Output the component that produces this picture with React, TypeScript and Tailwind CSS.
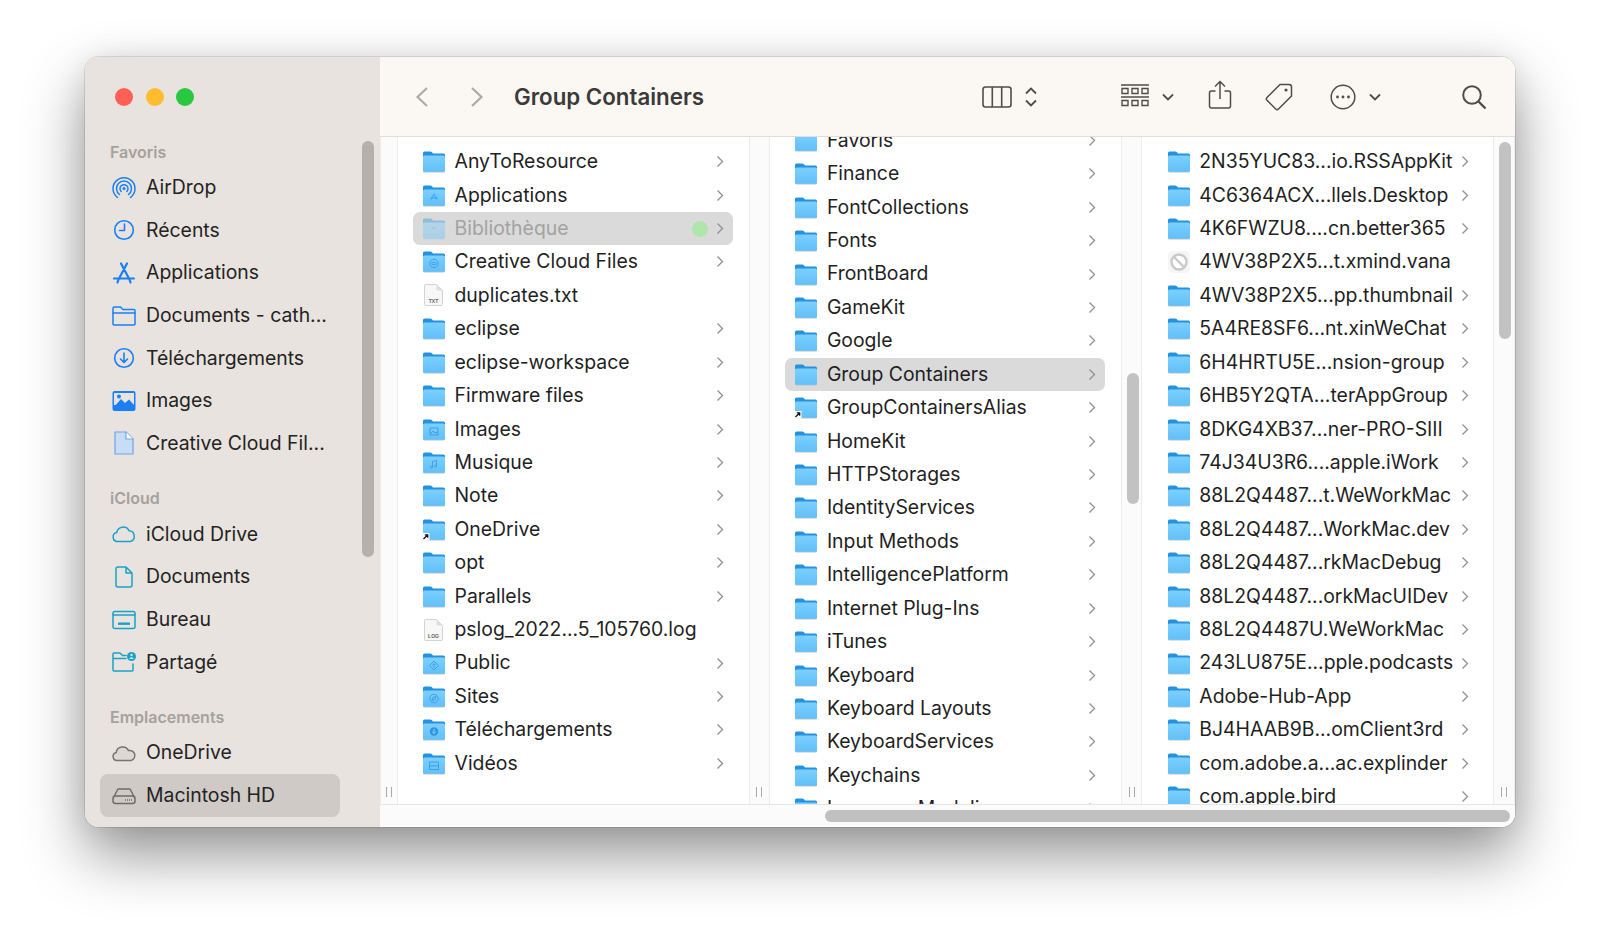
import type { ReactNode } from "react";

type Glyph = "apps" | "lib" | "cc" | "image" | "music" | "public" | "sites" | "down" | "video";

type Item = {
  name: string;
  kind?: "folder" | "doc" | "blocked";
  glyph?: Glyph;
  alias?: boolean;
  label?: string;
  noArrow?: boolean;
  dimmed?: boolean;
  tag?: boolean;
  selected?: boolean;
};

const col1: Item[] = [
  { name: "AnyToResource" },
  { name: "Applications", glyph: "apps" },
  { name: "Bibliothèque", glyph: "lib", dimmed: true, tag: true, selected: true },
  { name: "Creative Cloud Files", glyph: "cc" },
  { name: "duplicates.txt", kind: "doc", label: "TXT", noArrow: true },
  { name: "eclipse" },
  { name: "eclipse-workspace" },
  { name: "Firmware files" },
  { name: "Images", glyph: "image" },
  { name: "Musique", glyph: "music" },
  { name: "Note" },
  { name: "OneDrive", alias: true },
  { name: "opt" },
  { name: "Parallels" },
  { name: "pslog_2022...5_105760.log", kind: "doc", label: "LOG", noArrow: true },
  { name: "Public", glyph: "public" },
  { name: "Sites", glyph: "sites" },
  { name: "Téléchargements", glyph: "down" },
  { name: "Vidéos", glyph: "video" },
];

const col2: Item[] = [
  { name: "Favoris" },
  { name: "Finance" },
  { name: "FontCollections" },
  { name: "Fonts" },
  { name: "FrontBoard" },
  { name: "GameKit" },
  { name: "Google" },
  { name: "Group Containers", selected: true },
  { name: "GroupContainersAlias", alias: true },
  { name: "HomeKit" },
  { name: "HTTPStorages" },
  { name: "IdentityServices" },
  { name: "Input Methods" },
  { name: "IntelligencePlatform" },
  { name: "Internet Plug-Ins" },
  { name: "iTunes" },
  { name: "Keyboard" },
  { name: "Keyboard Layouts" },
  { name: "KeyboardServices" },
  { name: "Keychains" },
  { name: "LanguageModeling" },
];

const col3: Item[] = [
  { name: "2N35YUC83...io.RSSAppKit" },
  { name: "4C6364ACX...llels.Desktop" },
  { name: "4K6FWZU8....cn.better365" },
  { name: "4WV38P2X5...t.xmind.vana", kind: "blocked", noArrow: true },
  { name: "4WV38P2X5...pp.thumbnail" },
  { name: "5A4RE8SF6...nt.xinWeChat" },
  { name: "6H4HRTU5E...nsion-group" },
  { name: "6HB5Y2QTA...terAppGroup" },
  { name: "8DKG4XB37...ner-PRO-SIII" },
  { name: "74J34U3R6....apple.iWork" },
  { name: "88L2Q4487...t.WeWorkMac" },
  { name: "88L2Q4487...WorkMac.dev" },
  { name: "88L2Q4487...rkMacDebug" },
  { name: "88L2Q4487...orkMacUIDev" },
  { name: "88L2Q4487U.WeWorkMac" },
  { name: "243LU875E...pple.podcasts" },
  { name: "Adobe-Hub-App" },
  { name: "BJ4HAAB9B...omClient3rd" },
  { name: "com.adobe.a...ac.explinder" },
  { name: "com.apple.bird" },
];

function FolderGlyph({ glyph }: { glyph: Glyph }) {
  const s = { fill: "none", stroke: "#3a9be2", strokeWidth: 0.9 };
  switch (glyph) {
    case "apps":
      return <path d="M11 9l-3 5.500M11 9l3 5.500M7.500 13h7" {...s} />;
    case "lib":
      return <path d="M9 10h4M8.500 16h.6M13 16h.6" {...s} />;
    case "cc":
      return (
        <g {...s}>
          <circle cx="11" cy="12.500" r="4.200" />
          <ellipse cx="11" cy="12.500" rx="2.200" ry="1.400" />
        </g>
      );
    case "image":
      return <path d="M7 9h8v7H7zM7 15l3-3 2 2 1.500-1 1.500 2" {...s} />;
    case "music":
      return <path d="M9.500 15V9.500l4-1v5.500M9.500 15a1 1 0 1 1-1-.9M13.500 14a1 1 0 1 1-1-.9" {...s} />;
    case "public":
      return <path d="M11 8l4.500 4.500L11 17l-4.500-4.500zM11 15v-4M9.500 12L11 10.500l1.500 1.500" {...s} />;
    case "sites":
      return (
        <g {...s}>
          <circle cx="11" cy="12.500" r="4.200" />
          <path d="M13 10.500l-3 1-1 3 3-1z" />
        </g>
      );
    case "down":
      return (
        <g>
          <circle cx="11" cy="12.500" r="4.200" fill="#2f93de" />
          <path d="M11 10v4.500M9.200 12.800L11 14.500l1.800-1.700" fill="none" stroke="#8fd3fb" strokeWidth="1" />
        </g>
      );
    case "video":
      return <path d="M6.500 9h9v7.500h-9zM6.500 12.800h9" {...s} />;
  }
}

function Folder({ glyph, alias }: { glyph?: Glyph; alias?: boolean }) {
  return (
    <svg width="24" height="23" viewBox="0 0 24 23" className="shrink-0">
      <defs>
        <linearGradient id="folderBody" x1="0" y1="0" x2="0" y2="1">
          <stop offset="0" stopColor="#7bd0fe" />
          <stop offset="1" stopColor="#62bff9" />
        </linearGradient>
      </defs>
      <path d="M1 21a1.500 1.500 0 0 0 1.500 1.500h19A1.500 1.500 0 0 0 23 21V8H1z" fill="#b9c3ca" />
      <path
        d="M1 5V3a1.500 1.500 0 0 1 1.500-1.500h5.800c.6 0 1 .2 1.400.6L11 3.500h10.500A1.500 1.500 0 0 1 23 5v4H1z"
        fill="#2492de"
      />
      <path
        d="M1 7a1.500 1.500 0 0 1 1.500-1.500h19A1.500 1.500 0 0 1 23 7v13.500a1.200 1.200 0 0 1-1.200 1.200H2.200A1.200 1.200 0 0 1 1 20.500z"
        fill="url(#folderBody)"
      />
      {glyph && (
        <g transform="translate(1 1)">
          <FolderGlyph glyph={glyph} />
        </g>
      )}
      {alias && (
        <g>
          <rect x="0" y="15" width="7.500" height="7.500" fill="#ffffff" />
          <path d="M1.500 21l4-4M2.800 16.800h2.900v2.900" fill="none" stroke="#111111" strokeWidth="1.300" />
        </g>
      )}
    </svg>
  );
}

function DocIcon({ label }: { label?: string }) {
  return (
    <svg width="24" height="24" viewBox="0 0 24 24" className="shrink-0">
      <path
        d="M3.500 1.500h11l6 6v14a1 1 0 0 1-1 1h-16a1 1 0 0 1-1-1v-19a1 1 0 0 1 1-1z"
        fill="#f7f7f7"
        stroke="#d3d3d3"
        strokeWidth="1"
      />
      <path d="M14.500 1.500v5a1 1 0 0 0 1 1h5z" fill="#dedede" />
      <text
        x="11.500"
        y="19.500"
        textAnchor="middle"
        fontSize="5"
        fontWeight="600"
        fontFamily="Liberation Sans, sans-serif"
        fill="#666666"
      >
        {label}
      </text>
    </svg>
  );
}

function BlockedIcon() {
  return (
    <svg width="24" height="24" viewBox="0 0 24 24" className="shrink-0">
      <rect x="1" y="1" width="22" height="22" rx="5" fill="#f6f6f6" />
      <circle cx="12" cy="12" r="7.500" fill="#ffffff" stroke="#c9c9c9" strokeWidth="2.400" />
      <path d="M7 7l10 10" stroke="#c9c9c9" strokeWidth="2.400" />
    </svg>
  );
}

function Chevron() {
  return (
    <svg width="8" height="13" viewBox="0 0 8 13" className="shrink-0">
      <path d="M1.500 1.500l5 5-5 5" fill="none" stroke="#8f8f8f" strokeWidth="1.300" />
    </svg>
  );
}

function Row({ item }: { item: Item }) {
  const kind = item.kind ?? "folder";
  return (
    <div
      className={`mx-[15.500px] flex h-[33.430px] shrink-0 items-center rounded-[7px] pl-[9px] pr-[9px] ${
        item.selected ? "bg-[#dadada]" : ""
      }`}
    >
      <div className={`flex w-[32.500px] shrink-0 ${item.dimmed ? "opacity-40" : ""}`}>
        {kind === "folder" && <Folder glyph={item.glyph} alias={item.alias} />}
        {kind === "doc" && <DocIcon label={item.label} />}
        {kind === "blocked" && <BlockedIcon />}
      </div>
      <span className={`whitespace-nowrap ${item.dimmed ? "text-[#a2a2a2]" : "text-[#1f1f1f]"}`}>{item.name}</span>
      <div className="ml-auto flex items-center gap-[8px]">
        {item.tag && <span className="h-[16px] w-[16px] rounded-full bg-[#b0e6ab]" />}
        {!item.noArrow && <Chevron />}
      </div>
    </div>
  );
}

function Handle() {
  return (
    <div className="absolute bottom-[7px] left-1/2 flex h-[10px] -translate-x-1/2 gap-[4px]">
      <span className="h-full w-px bg-[#a8a8a8]" />
      <span className="h-full w-px bg-[#a8a8a8]" />
    </div>
  );
}

function Strip({ width, children }: { width: string; children?: ReactNode }) {
  return <div className={`relative h-full shrink-0 border-x border-[#ececec] bg-[#fbfbfb] ${width}`}>{children}</div>;
}

function Column({ items, top }: { items: Item[]; top: string }) {
  return (
    <div className={`flex h-full w-[351px] shrink-0 flex-col overflow-hidden bg-white ${top}`}>
      {items.map((item) => (
        <Row key={item.name} item={item} />
      ))}
    </div>
  );
}

const blue = "#1a7ff5";
const teal = "#19a2c9";

function SideIcon({ children }: { children: ReactNode }) {
  return (
    <svg
      width="26"
      height="26"
      viewBox="0 0 26 26"
      fill="none"
      strokeWidth="1.500"
      strokeLinecap="round"
      strokeLinejoin="round"
      className="shrink-0"
    >
      {children}
    </svg>
  );
}

const icons: Record<string, ReactNode> = {
  airdrop: (
    <SideIcon>
      <g stroke={blue}>
        <path d="M6.500 22.500a11 11 0 1 1 13 0" />
        <path d="M8.500 19.500a7.500 7.500 0 1 1 9 0" />
        <path d="M10.200 16.500a4 4 0 1 1 5.600 0" />
        <circle cx="13" cy="13.500" r="0.800" fill={blue} />
      </g>
    </SideIcon>
  ),
  recents: (
    <SideIcon>
      <g stroke={blue} strokeWidth="1.600">
        <circle cx="13" cy="13" r="9.300" />
        <path d="M13.500 7v6.500H8.500" />
      </g>
    </SideIcon>
  ),
  apps: (
    <SideIcon>
      <g stroke={blue} strokeWidth="2.200">
        <path d="M10 3.500l8.500 16M16 3.500l-8.500 16M3 18.500h20M6.500 22.500l1-3M19.500 22.500l-1-3" />
      </g>
    </SideIcon>
  ),
  folder: (
    <SideIcon>
      <g stroke={blue}>
        <path d="M2 8V5.500A1.500 1.500 0 0 1 3.500 4h6L12 6.500h11a1 1 0 0 1 1 1V21a1 1 0 0 1-1 1H3a1 1 0 0 1-1-1z" />
        <path d="M2 10h22" />
      </g>
    </SideIcon>
  ),
  download: (
    <SideIcon>
      <g stroke={blue} strokeWidth="1.600">
        <circle cx="13" cy="13" r="9.300" />
        <path d="M13 8v9.500M9.500 14l3.500 3.500 3.500-3.500" />
      </g>
    </SideIcon>
  ),
  image: (
    <SideIcon>
      <rect x="1.500" y="3" width="23" height="20" rx="2" fill={blue} />
      <rect x="3" y="5" width="20" height="12" fill="#e8e3df" />
      <path d="M3 19l7-8 4 4 4-3.500 5 5.500v2H3z" fill={blue} />
      <circle cx="8" cy="8.500" r="2" fill={blue} />
    </SideIcon>
  ),
  doc: (
    <SideIcon>
      <path d="M4 2h11l7 7v15H4z" fill="#c9dcf5" stroke="#6fa5e8" strokeWidth="1.200" />
      <path d="M15 2v7h7" fill="#ffffff" stroke="#6fa5e8" strokeWidth="1.200" />
    </SideIcon>
  ),
  cloud: (
    <SideIcon>
      <path
        d="M6.500 20.500a4.500 4.500 0 0 1-.8-8.900 6.500 6.500 0 0 1 12.300-1.800 5.500 5.500 0 0 1 1.500 10.700z"
        stroke={teal}
      />
    </SideIcon>
  ),
  tealdoc: (
    <SideIcon>
      <path d="M7 3h8l6 6v12a2 2 0 0 1-2 2H7a2 2 0 0 1-2-2V5a2 2 0 0 1 2-2zM15 3v6h6" stroke={teal} />
    </SideIcon>
  ),
  desktop: (
    <SideIcon>
      <g stroke={teal}>
        <rect x="2" y="4.500" width="22" height="17" rx="2" />
        <path d="M2 8h22" />
      </g>
      <rect x="7" y="15.500" width="12" height="2.400" fill={teal} />
    </SideIcon>
  ),
  shared: (
    <SideIcon>
      <g stroke={teal}>
        <path d="M15 22H3a1 1 0 0 1-1-1V5a1 1 0 0 1 1-1h6l2.500 2.500H15M2 9.500h13M22 15v6a1 1 0 0 1-1 1h-6" />
      </g>
      <circle cx="20.500" cy="7.500" r="4.500" fill={teal} />
      <circle cx="20.500" cy="6" r="1.200" fill="#e8e3df" />
      <path d="M18.200 10a2.400 2.400 0 0 1 4.600 0z" fill="#e8e3df" />
    </SideIcon>
  ),
  onedrive: (
    <SideIcon>
      <path
        d="M6 20.500a4 4 0 0 1-.8-7.900 6.500 6.500 0 0 1 12.300-2 5 5 0 0 1 2.500 9.900z"
        fill="#dcd8d3"
        stroke="#77736f"
      />
    </SideIcon>
  ),
  hd: (
    <SideIcon>
      <g stroke="#6f6b67">
        <path d="M3 14.500L7 7h12l4 7.500" />
        <rect x="2" y="14" width="22" height="7.500" rx="2.500" />
        <path d="M14 18h7" strokeDasharray="1 1" strokeLinecap="butt" strokeWidth="1.400" />
      </g>
    </SideIcon>
  ),
};

function SideLink({ icon, label, active }: { icon: string; label: string; active?: boolean }) {
  return (
    <div
      className={`ml-[15px] flex h-[42.600px] w-[240px] items-center rounded-[8px] pl-[11px] ${
        active ? "bg-[#cfcac5]" : ""
      }`}
    >
      <div className="flex w-[35px] shrink-0 items-center">{icons[icon]}</div>
      <span className="whitespace-nowrap text-[#232323]">{label}</span>
    </div>
  );
}

function SideHeading({ label, className }: { label: string; className: string }) {
  return (
    <div className={`flex h-[22px] items-center pl-[25px] text-[16px] font-semibold text-[#a5a19d] ${className}`}>
      {label}
    </div>
  );
}

function Sidebar() {
  return (
    <aside className="relative flex h-full w-[295px] shrink-0 flex-col bg-[#e8e3df]">
      <div className="flex gap-[12.500px] pl-[30px] pt-[31px]">
        <span className="h-[18px] w-[18px] rounded-full bg-[#ff5f57]" />
        <span className="h-[18px] w-[18px] rounded-full bg-[#febc2e]" />
        <span className="h-[18px] w-[18px] rounded-full bg-[#28c840]" />
      </div>
      <SideHeading label="Favoris" className="mt-[35px]" />
      <div className="mt-[3.500px]">
        <SideLink icon="airdrop" label="AirDrop" />
        <SideLink icon="recents" label="Récents" />
        <SideLink icon="apps" label="Applications" />
        <SideLink icon="folder" label="Documents - cath..." />
        <SideLink icon="download" label="Téléchargements" />
        <SideLink icon="image" label="Images" />
        <SideLink icon="doc" label="Creative Cloud Fil..." />
      </div>
      <SideHeading label="iCloud" className="mt-[22px]" />
      <div className="mt-[4.500px]">
        <SideLink icon="cloud" label="iCloud Drive" />
        <SideLink icon="tealdoc" label="Documents" />
        <SideLink icon="desktop" label="Bureau" />
        <SideLink icon="shared" label="Partagé" />
      </div>
      <SideHeading label="Emplacements" className="mt-[22px]" />
      <div className="mt-[4px]">
        <SideLink icon="onedrive" label="OneDrive" />
        <SideLink icon="hd" label="Macintosh HD" active />
      </div>
      {/* overlay scrollbar */}
      <div className="absolute left-[277px] top-[84px] h-[416px] w-[12px] rounded-full bg-[#b5b0ab]" />
    </aside>
  );
}

function Toolbar() {
  return (
    <header className="flex h-[80px] shrink-0 items-center border-b border-[#e2ded9] bg-[#fbf7f2] pl-[35px]">
      <svg width="14" height="22" viewBox="0 0 14 22" fill="none" stroke="#ababab" strokeWidth="2.200">
        <path d="M12 2L2.500 11l9.500 9" />
      </svg>
      <svg width="14" height="22" viewBox="0 0 14 22" fill="none" stroke="#ababab" strokeWidth="2.200" className="ml-[41px]">
        <path d="M2 2l9.500 9L2 20" />
      </svg>
      <h1 className="ml-[30px] w-[300px] whitespace-nowrap text-[22.300px] font-semibold text-[#3a3a3a]">
        Group Containers
      </h1>
      <div className="ml-[167.500px] flex items-center text-[#4d4d4d]">
        <svg width="30" height="22" viewBox="0 0 30 22" fill="none" stroke="currentColor" strokeWidth="1.600">
          <rect x="1" y="1" width="28" height="20" rx="2.500" />
          <path d="M10.300 1v20M19.700 1v20" />
        </svg>
        <svg width="14" height="24" viewBox="0 0 14 24" fill="none" stroke="currentColor" strokeWidth="1.800" className="ml-[12px]">
          <path d="M2 8.500l5-5 5 5M2 15.500l5 5 5-5" />
        </svg>
        <svg width="30" height="26" viewBox="0 0 30 26" fill="none" stroke="currentColor" strokeWidth="1.400" className="ml-[82px]">
          <path d="M1 1h28M1 13h28" strokeWidth="1.500" />
          <path d="M2 4.500h6v5H2zM12 4.500h6v5h-6zM22 4.500h6v5h-6zM2 16.500h6v5H2zM12 16.500h6v5h-6zM22 16.500h6v5h-6z" />
        </svg>
        <svg width="14" height="10" viewBox="0 0 14 10" fill="none" stroke="currentColor" strokeWidth="1.800" className="ml-[11px]">
          <path d="M2 2.500l5 5 5-5" />
        </svg>
        <svg width="24" height="30" viewBox="0 0 24 30" fill="none" stroke="currentColor" strokeWidth="1.500" className="ml-[33px] -mt-[3px]">
          <path d="M7.500 11H3.500a2 2 0 0 0-2 2v13a2 2 0 0 0 2 2h17a2 2 0 0 0 2-2V13a2 2 0 0 0-2-2h-4" />
          <path d="M12 19V2M7 6.500L12 1.500l5 5" />
        </svg>
        <svg width="30" height="30" viewBox="0 0 30 30" fill="none" stroke="currentColor" strokeWidth="1.500" className="ml-[32px]">
          <path d="M16 2.500h9a2.500 2.500 0 0 1 2.500 2.500v9L14.500 27a2 2 0 0 1-2.800 0L3 18.300a2 2 0 0 1 0-2.800z" />
          <circle cx="22" cy="8" r="1.600" fill="currentColor" stroke="none" />
        </svg>
        <svg width="26" height="26" viewBox="0 0 26 26" fill="none" stroke="currentColor" strokeWidth="1.500" className="ml-[36px]">
          <circle cx="13" cy="13" r="11.800" />
          <circle cx="7.500" cy="13" r="1.400" fill="currentColor" stroke="none" />
          <circle cx="13" cy="13" r="1.400" fill="currentColor" stroke="none" />
          <circle cx="18.500" cy="13" r="1.400" fill="currentColor" stroke="none" />
        </svg>
        <svg width="14" height="10" viewBox="0 0 14 10" fill="none" stroke="currentColor" strokeWidth="1.800" className="ml-[12px]">
          <path d="M2 2.500l5 5 5-5" />
        </svg>
        <svg width="26" height="26" viewBox="0 0 26 26" fill="none" stroke="currentColor" strokeWidth="2" className="ml-[79px]">
          <circle cx="11" cy="11" r="8.800" />
          <path d="M17.500 17.500l7 7" strokeWidth="2.400" />
        </svg>
      </div>
    </header>
  );
}

export default function App() {
  return (
    <div className="h-[939px] w-full overflow-hidden bg-white pl-[85px] pt-[57px] font-['Inter',sans-serif] text-[19.400px]">
      <div className="flex h-[770px] w-[1430px] overflow-hidden rounded-[14px] shadow-[0_28px_60px_rgba(0,0,0,0.42),0_0_30px_rgba(0,0,0,0.08),0_0_0_1px_rgba(0,0,0,0.1)]">
        <Sidebar />
        <main className="flex min-w-0 flex-1 flex-col bg-white">
          <Toolbar />
          <div className="relative flex h-[667px] overflow-hidden">
            <Strip width="w-[17.500px]">
              <Handle />
            </Strip>
            <Column items={col1} top="pt-[8px]" />
            <Strip width="w-[21.400px]">
              <Handle />
            </Strip>
            <div className="h-full w-[351px] shrink-0 overflow-hidden">
              <div className="-mt-[13.400px]">
                <Column items={col2} top="" />
              </div>
            </div>
            <Strip width="w-[21.400px]">
              <Handle />
              <div className="absolute left-[5px] top-[236px] h-[131px] w-[12px] rounded-full bg-[#c2c2c2]" />
            </Strip>
            <Column items={col3} top="pt-[8px]" />
            <Strip width="w-[21.400px]">
              <Handle />
              <div className="absolute left-[4.500px] top-[5px] h-[197px] w-[12px] rounded-full bg-[#c2c2c2]" />
            </Strip>
          </div>
          <div className="flex h-[22px] shrink-0 items-center justify-end border-t border-[#e6e6e6] bg-[#fbfbfb] pr-[5px]">
            <div className="h-[12px] w-[685px] rounded-full bg-[#c0c0c0]" />
          </div>
        </main>
      </div>
    </div>
  );
}
